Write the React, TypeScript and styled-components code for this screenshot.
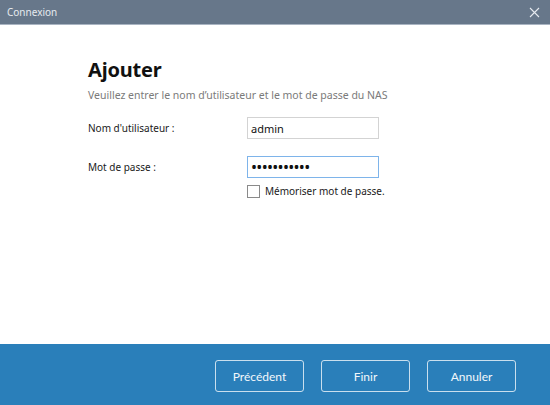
import React, { useState } from "react";
import styled, { createGlobalStyle } from "styled-components";

const GlobalStyle = createGlobalStyle`
  html, body {
    margin: 0;
    padding: 0;
    width: 550px;
    height: 405px;
    overflow: hidden;
    background: #ffffff;
  }
  * { box-sizing: border-box; }
`;

const Dialog = styled.div`
  display: flex;
  flex-direction: column;
  width: 550px;
  height: 405px;
  font-family: "Noto Sans", "Open Sans", sans-serif;
`;

const TitleBar = styled.div`
  display: flex;
  align-items: center;
  justify-content: space-between;
  height: 25px;
  padding: 0 8px 0 7px;
  background: #67778a;
  border-bottom: 1px solid #a9b4c2;
  color: #e6eaef;
  font-size: 10px;
`;

const CloseButton = styled.button`
  display: flex;
  align-items: center;
  justify-content: center;
  width: 16px;
  height: 16px;
  padding: 0;
  border: none;
  background: transparent;
  cursor: pointer;
`;

const Content = styled.div`
  flex: 1;
  display: flex;
  flex-direction: column;
  padding: 31px 0 0 88px;
`;

const Heading = styled.h1`
  margin: 0;
  font-size: 20px;
  font-weight: 700;
  color: #111111;
  line-height: 28px;
  letter-spacing: -0.2px;
`;

const Subtitle = styled.p`
  margin: 4px 0 0;
  font-size: 10.5px;
  color: #7a7a7a;
  line-height: 15px;
`;

const Form = styled.div`
  display: grid;
  grid-template-columns: 159px 132px;
  grid-template-rows: 22px 22px auto;
  row-gap: 17px;
  margin-top: 14px;
  align-items: center;
`;

const Label = styled.label`
  font-size: 10px;
  color: #1a1a1a;
`;

const Input = styled.input<{ $secret?: boolean }>`
  width: 132px;
  height: 22px;
  padding: 0 3px;
  border: 1px solid #d3d3d3;
  outline: none;
  font-family: "Noto Sans", sans-serif;
  font-size: ${(p) => (p.$secret ? "16px" : "11px")};
  letter-spacing: ${(p) => (p.$secret ? "-0.7px" : "0")};
  color: #111111;
  background: #ffffff;

  &:focus {
    border-color: #7eb4ea;
  }
`;

const Remember = styled.label`
  grid-column: 2;
  display: flex;
  align-items: center;
  gap: 5px;
  margin-top: -11px;
  font-size: 10px;
  color: #1a1a1a;
  white-space: nowrap;
`;

const Box = styled.span`
  flex-shrink: 0;
  width: 13px;
  height: 13px;
  border: 1px solid #8a8a8a;
  background: #ffffff;
`;

const Footer = styled.div`
  display: flex;
  justify-content: flex-end;
  gap: 17px;
  height: 61px;
  padding: 16px 34px 0 0;
  background: #2a7fba;
`;

const FooterButton = styled.button`
  width: 89px;
  height: 32px;
  border: 1px solid rgba(255, 255, 255, 0.75);
  border-radius: 3px;
  background: transparent;
  color: #f2f7fb;
  font-family: Lato, "Noto Sans", sans-serif;
  font-size: 12px;
  cursor: pointer;
`;

const App = () => {
  const [user, setUser] = useState("admin");
  const [pass, setPass] = useState("adminadmin1");

  return (
    <>
      <GlobalStyle />
      <Dialog>
        <TitleBar>
          <span>Connexion</span>
          <CloseButton aria-label="Fermer">
            <svg width="11" height="11" viewBox="0 0 11 11">
              <path d="M1 1 L10 10 M10 1 L1 10" stroke="#e6eaef" strokeWidth="1.1" />
            </svg>
          </CloseButton>
        </TitleBar>
        <Content>
          <Heading>Ajouter</Heading>
          <Subtitle>Veuillez entrer le nom d’utilisateur et le mot de passe du NAS</Subtitle>
          <Form>
            <Label>Nom d'utilisateur :</Label>
            <Input value={user} onChange={(e) => setUser(e.target.value)} />
            <Label>Mot de passe :</Label>
            <Input
              type="password"
              $secret
              autoFocus
              value={pass}
              onChange={(e) => setPass(e.target.value)}
            />
            <Remember>
              <Box />
              Mémoriser mot de passe.
            </Remember>
          </Form>
        </Content>
        <Footer>
          <FooterButton>Précédent</FooterButton>
          <FooterButton>Finir</FooterButton>
          <FooterButton>Annuler</FooterButton>
        </Footer>
      </Dialog>
    </>
  );
};

export default App;
